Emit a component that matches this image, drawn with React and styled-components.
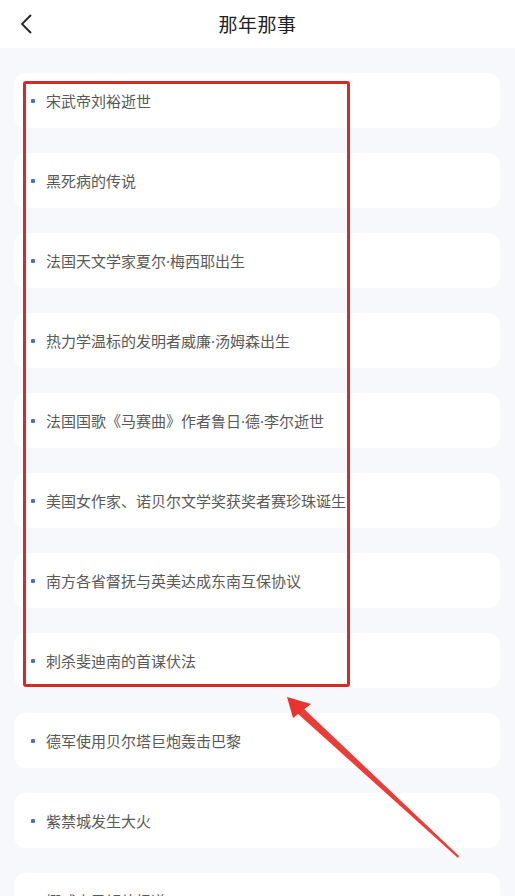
import React from 'react';
import styled, { createGlobalStyle } from 'styled-components';

const GlobalStyle = createGlobalStyle`
  html, body {
    margin: 0;
    padding: 0;
    background: #f6f8fc;
    font-family: "Noto Sans", "Noto Sans CJK SC", sans-serif;
  }
`;

const events = [
  '宋武帝刘裕逝世',
  '黑死病的传说',
  '法国天文学家夏尔·梅西耶出生',
  '热力学温标的发明者威廉·汤姆森出生',
  '法国国歌《马赛曲》作者鲁日·德·李尔逝世',
  '美国女作家、诺贝尔文学奖获奖者赛珍珠诞生',
  '南方各省督抚与英美达成东南互保协议',
  '刺杀斐迪南的首谋伏法',
  '德军使用贝尔塔巨炮轰击巴黎',
  '紫禁城发生大火',
  '挪威人民解放报道',
];

const Page = styled.div`
  position: relative;
  width: 515px;
  height: 896px;
  overflow: hidden;
  background: #f6f8fc;
`;

const Header = styled.header`
  height: 48px;
  background: #fff;
  display: flex;
  align-items: center;
  justify-content: center;
  position: relative;
`;

const BackButton = styled.button`
  position: absolute;
  left: 14px;
  top: 11px;
  width: 24px;
  height: 26px;
  padding: 0;
  border: none;
  background: none;
  display: flex;
  align-items: center;
  justify-content: center;
`;

const Title = styled.h1`
  margin: 0;
  font-size: 19px;
  font-weight: 400;
  color: #222;
  letter-spacing: 0.5px;
`;

const List = styled.ul`
  list-style: none;
  margin: 0;
  padding: 25px 15px 0 14px;
  display: flex;
  flex-direction: column;
  gap: 25px;
`;

const Card = styled.li`
  height: 55px;
  background: #fff;
  border-radius: 12px;
  display: flex;
  align-items: center;
  padding-left: 17px;
  gap: 11px;
`;

const Dot = styled.span`
  width: 4px;
  height: 4px;
  background: #4670d4;
  border-radius: 1px;
  flex-shrink: 0;
`;

const Text = styled.span`
  font-size: 15px;
  color: #595959;
  white-space: nowrap;
`;

const Highlight = styled.div`
  position: absolute;
  left: 23px;
  top: 81px;
  width: 321px;
  height: 600px;
  border: 3px solid #d52b27;
  border-radius: 3px;
  pointer-events: none;
`;

const Arrow = styled.svg`
  position: absolute;
  left: 0;
  top: 0;
  pointer-events: none;
`;

export default function App() {
  return (
    <Page>
      <GlobalStyle />
      <Header>
        <BackButton aria-label="返回">
          <svg width="14" height="22" viewBox="0 0 14 22">
            <path d="M12 2 L3 11 L12 20" fill="none" stroke="#222" strokeWidth="1.8" />
          </svg>
        </BackButton>
        <Title>那年那事</Title>
      </Header>
      <List>
        {events.map((e) => (
          <Card key={e}>
            <Dot />
            <Text>{e}</Text>
          </Card>
        ))}
      </List>
      <Highlight />
      <Arrow width="515" height="896" viewBox="0 0 515 896">
        <polygon points="458,858 459,856 302,707 297,713" fill="#e8332e" opacity="0.95" />
        <polygon points="287,697 311,704 293,718" fill="#e8332e" />
      </Arrow>
    </Page>
  );
}
